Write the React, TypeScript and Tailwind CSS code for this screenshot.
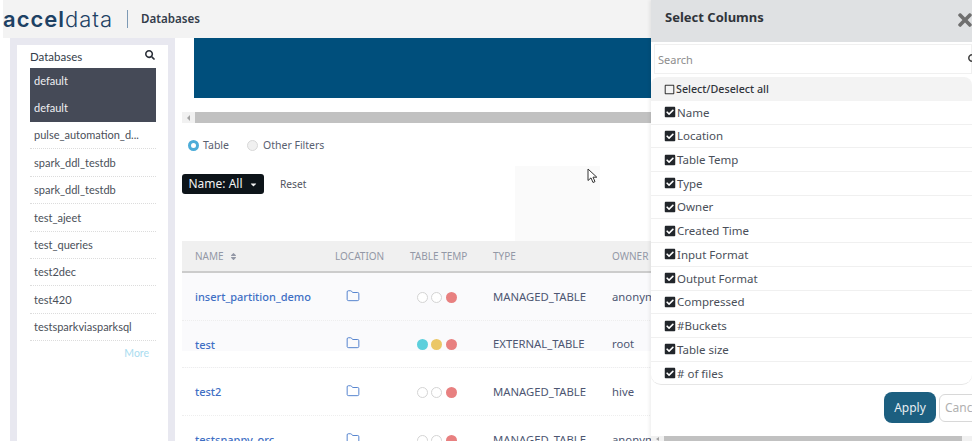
import { Folder } from "lucide-react";
import { FaCaretDown, FaCheckSquare, FaRegSquare, FaSearch, FaSort, FaTimes } from "react-icons/fa";

const databases = ["pulse_automation_d...", "spark_ddl_testdb", "spark_ddl_testdb", "test_ajeet", "test_queries", "test2dec", "test420", "testsparkviasparksql"];
const columns = ["Name", "Location", "Table Temp", "Type", "Owner", "Created Time", "Input Format", "Output Format", "Compressed", "#Buckets", "Table size", "# of files"];

const tables = [
  { name: "insert_partition_demo", temp: ["", "", "bg-[#e88080]"], type: "MANAGED_TABLE", owner: "anonymous", bg: "bg-[#fafafc]" },
  { name: "test", temp: ["bg-[#5ccfdc]", "bg-[#ebc766]", "bg-[#e88080]"], type: "EXTERNAL_TABLE", owner: "root", bg: "bg-[linear-gradient(#fafafc_30px,#ffffff_30px)]" },
  { name: "test2", temp: ["", "", "bg-[#e88080]"], type: "MANAGED_TABLE", owner: "hive", bg: "bg-white" },
  { name: "testsnappy_orc", temp: ["", "", "bg-[#e88080]"], type: "MANAGED_TABLE", owner: "anonymous", bg: "bg-white" },
];

const App = () => {
  return (
    <div className="relative flex h-[441px] w-[972px] flex-col overflow-hidden bg-white font-['Noto_Sans',sans-serif] text-[#3c4250]">
      {/* Header */}
      <header className="ml-[3px] flex h-[38px] shrink-0 items-center bg-[#f3f3f3]">
        <span className="w-[110px] whitespace-nowrap font-['Inter',sans-serif] text-[22px] leading-none tracking-[1px] text-[#1d4164]">
          <span className="font-semibold">accel</span>
          <span className="font-light">data</span>
        </span>
        <span className="ml-[14px] h-[18px] w-px bg-[#7d9ab5]" />
        <span className="ml-[13px] text-[11.6px] font-semibold text-[#333c4a]">Databases</span>
      </header>

      <div className="flex min-h-0 flex-1 pl-[10px]">
        {/* Sidebar */}
        <aside className="w-[165px] shrink-0 border-x-[7px] border-t-[7px] border-[#e8e8f0] bg-white pl-[13px] pr-[12px] font-['Lato',sans-serif]">
          <div className="flex h-[23px] items-center justify-between pt-[1px]">
            <span className="text-[11.5px] text-[#333c4a]">Databases</span>
            <FaSearch className="mb-[4px] mr-[1px] text-[10px] text-[#2a2f38]" />
          </div>
          <div className="bg-[#454a57] text-[11px] text-[#f0f0f2]">
            <div className="flex h-[26.5px] items-center pl-[4px]">default</div>
            <div className="flex h-[27.5px] items-center pl-[4px]">default</div>
          </div>
          {databases.map((db, i) => (
            <div key={i} className="flex h-[27.4px] items-center border-b border-dotted border-[#dcdcdc] pl-[4px] pt-[1px] text-[11px] text-[#4a4f59]">
              {db}
            </div>
          ))}
          <div className="mt-[5px] pr-[7px] text-right text-[10.5px] text-[#a9dcef]">More</div>
        </aside>

        {/* Main */}
        <main className="min-w-0 flex-1 bg-white">
          <div className="ml-[19px] h-[60px] bg-[#004f7c]" />
          <div className="ml-[7px] mt-[14px] flex h-[11px] bg-[#f1f1f1]">
            <span className="flex w-[13px] items-center justify-center">
              <span className="h-0 w-0 border-y-[3px] border-r-[3px] border-y-transparent border-r-[#a3a3a3]" />
            </span>
            <span className="flex-1 bg-[#c1c1c1]" />
          </div>

          <div className="ml-[13px] mt-[16px] flex h-[13px] items-center text-[10.5px] text-[#596070]">
            <span className="h-[11px] w-[11px] rounded-full border-[3px] border-[#4cacd8] bg-white" />
            <span className="ml-[4px]">Table</span>
            <span className="ml-[18px] h-[11px] w-[11px] rounded-full border border-[#d8d8d8] bg-[#f0f0f0]" />
            <span className="ml-[5px]">Other Filters</span>
          </div>

          <div className="ml-[7px] mt-[22px] flex h-[67px] items-start">
            <button className="flex h-[20px] w-[82px] items-center justify-center gap-[6px] rounded-[3px] bg-[#0d1419] text-[12px] text-[#f1f1f1]">
              Name: All
              <FaCaretDown className="text-[9px]" />
            </button>
            <span className="ml-[16px] text-[10.2px] leading-[20px] text-[#50545e]">Reset</span>
          </div>

          {/* Table */}
          <div className="ml-[7px] overflow-hidden">
            <div className="grid h-[32px] w-[600px] grid-cols-[140px_75px_83px_119px_1fr] items-center border-b-2 border-[#cccccc] bg-[#f0f0f0] pl-[13px] pt-[1px] text-[10px] text-[#9398a6]">
              <span className="flex items-center gap-[5px]">
                NAME
                <FaSort className="text-[9px]" />
              </span>
              <span>LOCATION</span>
              <span>TABLE TEMP</span>
              <span>TYPE</span>
              <span>OWNER</span>
            </div>
            {tables.map((t) => (
              <div key={t.name} className={`grid h-[47.6px] w-[600px] grid-cols-[140px_75px_83px_119px_1fr] items-center border-b border-dotted border-[#eeeeee] pl-[13px] pt-[2px] text-[11.3px] ${t.bg}`}>
                <span className="text-[11px] font-medium text-[#3f6fc4]">{t.name}</span>
                <span className="pl-[11px]">
                  <Folder size={14} strokeWidth={1.5} className="mb-[3px] text-[#3f74c8]" />
                </span>
                <span className="flex items-center gap-[3.3px] pl-[7px]">
                  {t.temp.map((c, i) => (
                    <span key={i} className={`h-[11px] w-[11px] rounded-full ${c || "border-[1.5px] border-[#d4d4d4] bg-white"}`} />
                  ))}
                </span>
                <span className="text-[#4d5672]">{t.type}</span>
                <span className="text-[#4d5672]">{t.owner}</span>
              </div>
            ))}
          </div>
        </main>
      </div>

      {/* Faint video artefact behind the pointer */}
      <div className="absolute left-[515px] top-[166px] h-[75px] w-[85px] bg-[#fafafa]" />

      {/* Select columns drawer */}
      <div className="absolute inset-y-0 left-[651px] flex w-[321px] flex-col bg-white shadow-[-2px_0_3px_rgba(0,0,0,0.06)]">
        <div className="flex h-[42px] shrink-0 items-center justify-between bg-[#dfe1e3] pl-[14px]">
          <span className="mb-[7px] text-[13px] font-bold text-[#30343a]">Select Columns</span>
          <FaTimes className="mb-[2px] mr-[-3px] text-[20px] text-[#6f6f6f]" />
        </div>
        <div className="ml-[3px] mt-[2px] flex h-[30px] shrink-0 items-center justify-between border border-[#f0f0f0] pl-[3px] pt-[3px] text-[11px] text-[#8d8d8d]">
          Search
          <FaSearch className="mb-[3px] mr-[-7px] text-[10px] text-[#444444]" />
        </div>
        <div className="mt-[3px] h-[308px] shrink-0 overflow-hidden rounded-b-[10px] rounded-t-[8px] border-b border-[#e6e6e6]">
          <div className="flex h-[24px] items-center gap-[1px] bg-[#f3f3f3] pl-[13px] text-[10.7px] font-medium text-[#30343a]">
            <FaRegSquare className="text-[11px] text-[#333333]" />
            Select/Deselect all
          </div>
          {columns.map((c) => (
            <div key={c} className="flex h-[23.7px] items-center gap-[1px] border-b border-[#f0f0f0] pl-[13px] text-[11.5px] text-[#4a4f59] last:border-b-0">
              <FaCheckSquare className="text-[12px] text-[#22262b]" />
              {c}
            </div>
          ))}
        </div>
        <div className="ml-[233px] mt-[7px] flex items-center gap-[3px]">
          <button className="h-[31px] w-[52px] shrink-0 rounded-[8px] bg-[#1c5f80] text-[12px] text-[#e8eef2]">Apply</button>
          <button className="h-[28px] w-[60px] shrink-0 rounded-[6px] border border-[#d8d8d8] pl-[5px] text-left text-[12px] text-[#b0b0b0]">Cancel</button>
        </div>
        <div className="mt-auto flex h-[5px] shrink-0 items-center bg-[#f1f1f1]">
          <span className="ml-[5px] h-0 w-0 border-y-[2px] border-r-[3px] border-y-transparent border-r-[#a3a3a3]" />
          <span className="ml-[5px] h-full w-[298px] bg-[#c1c1c1]" />
        </div>
      </div>

      {/* Mouse pointer */}
      <svg className="absolute left-[587px] top-[168px]" width="11" height="16" viewBox="0 0 11 16">
        <path d="M1 1v11.5l3-2.6 2 4.6 2-.9-2-4.4h3.8z" fill="#fff" stroke="#333" strokeWidth="1" />
      </svg>
    </div>
  );
};

export default App;
